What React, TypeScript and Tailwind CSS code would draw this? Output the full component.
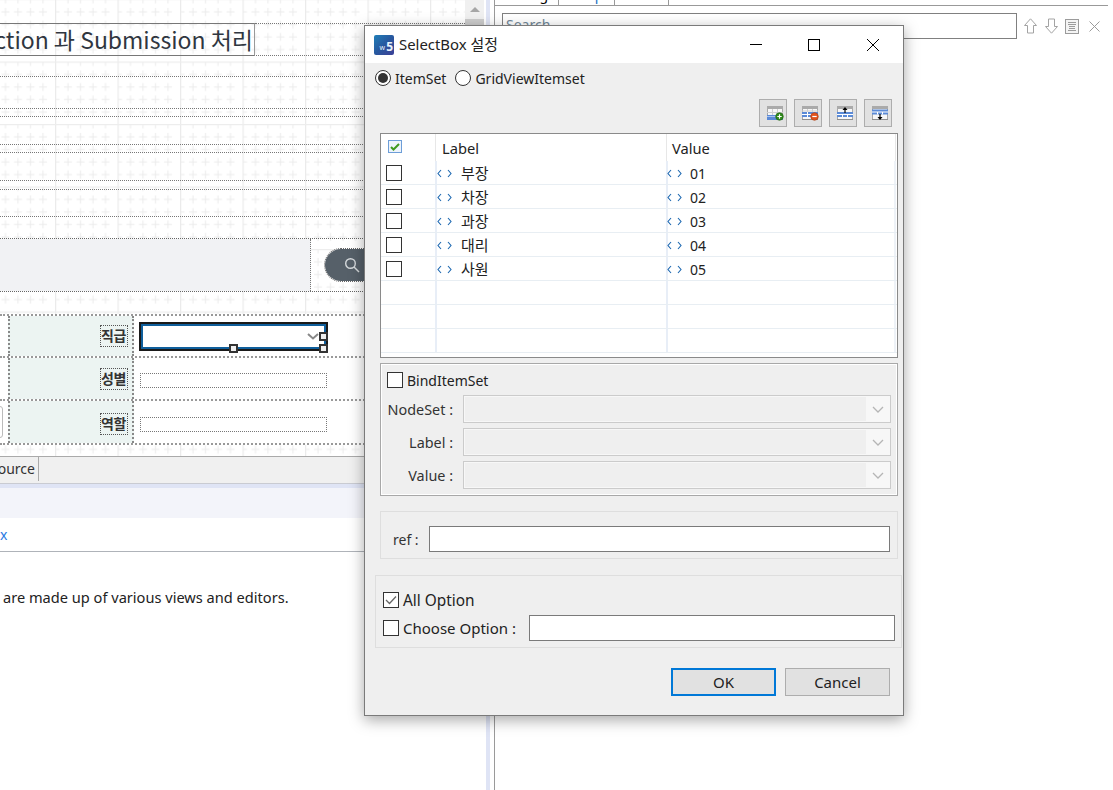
const font = "font-['Noto_Sans','Noto_Sans_CJK_KR',sans-serif]";

const crosses = [0, 12.5, 25, 37.5, 50].flatMap((x) => [0, 12.5, 25, 37.5, 50].map((y) => [x, y]));

function CanvasGrid() {
  return (
    <svg className="absolute inset-0 h-full w-full" aria-hidden="true">
      <defs>
        <pattern id="grid" width="62.5" height="62.5" patternUnits="userSpaceOnUse" patternTransform="translate(-7.5 -1)">
          {crosses.map(([x, y]) => (
            <path key={`${x}-${y}`} d={`M${x - 3.5} ${y + 0.5}h8M${x + 0.5} ${y - 3.5}v8`} stroke="#ebebeb" strokeWidth="1" fill="none" />
          ))}
          <path d="M0.500 0V62.500" stroke="#ebebeb" strokeWidth="1.500" fill="none" />
          <path d="M0 0.500H62.500" stroke="#ededed" strokeWidth="1.500" fill="none" />
        </pattern>
      </defs>
      <rect width="100%" height="314" fill="url(#grid)" />
      <rect y="444" width="100%" height="12" fill="url(#grid)" />
    </svg>
  );
}

function Band({ mt, h }: { mt: string; h: string }) {
  return <div className={`${mt} ${h} border-y border-dotted border-[#777]`} />;
}

function Handle({ className }: { className: string }) {
  return <div className={`absolute h-[9px] w-[9px] border-2 border-[#333] bg-[#efefef] ${className}`} />;
}

function DesignRow({ label, h, children, left, labelClass = "" }: { label: string; h: string; children: React.ReactNode; left?: React.ReactNode; labelClass?: string }) {
  return (
    <div className={`flex ${h} border-b-2 border-dotted border-[#999] bg-white`}>
      <div className="w-[8px] shrink-0 pt-[5px]">{left}</div>
      <div className="flex w-[126px] shrink-0 items-center justify-end border-x-2 border-dotted border-[#888] bg-[#ecf4f2] pr-[4px]">
        <span className={`w-[28px] border border-dotted border-[#555] text-[14px] leading-[20px] font-bold tracking-[-0.5px] whitespace-nowrap text-[#333] ${labelClass}`}>{label}</span>
      </div>
      <div className="flex flex-1 items-center pl-[6px]">{children}</div>
    </div>
  );
}

function LeftPane() {
  return (
    <div className="relative h-[790px] w-[465px] shrink-0 overflow-hidden bg-white">
      <CanvasGrid />
      <div className="relative flex flex-col pt-[23px]">
        <div className="flex h-[33px] border-b border-dotted border-[#777]">
          <div className="-mb-px flex h-[33px] w-[255px] items-center justify-end overflow-hidden border-y border-r border-[#777] border-r-[#999] border-r-dotted pr-[1px] font-['Noto_Sans_CJK_KR',sans-serif] text-[23px] whitespace-nowrap text-[#2f3640]">
            ction 과 Submission 처리
          </div>
          <div className="flex-1 border-t border-dotted border-[#777]" />
        </div>
        <Band mt="mt-[20px]" h="h-[33px]" />
        <Band mt="mt-[7px]" h="h-[29px]" />
        <Band mt="mt-[7px]" h="h-[29px]" />
        <Band mt="mt-[8px]" h="h-[28px]" />
        <div className="mt-[21px] flex h-[54px] border-y border-dotted border-[#666]">
          <div className="w-[311px] border-r border-dotted border-[#777] bg-[#f1f2f4]" />
          <div className="mt-[10px] ml-[14px] flex h-[32px] w-[60px] items-center rounded-l-[16px] bg-[#566069] pl-[19px] outline-1 outline-[#666] outline-dotted">
            <svg width="16" height="16" viewBox="0 0 16 16" fill="none" stroke="#d5d9dc" strokeWidth="1.400">
              <circle cx="6.500" cy="6.500" r="4.800" />
              <path d="M10 10l5 5" />
            </svg>
          </div>
        </div>
        <div className="mt-[22px] border-t-2 border-dotted border-[#999]">
          <DesignRow label="직급" h="h-[42px]">
            <div className="relative flex h-[27px] w-[187px] items-center justify-end border-[3px] border-[#0f5f9c] outline-2 -outline-offset-1 outline-[#1a1a1a]">
              <svg width="12" height="7" viewBox="0 0 12 7" fill="none" stroke="#888" strokeWidth="2" className="mt-[1px] mr-[5px]">
                <path d="M1 1l5 4.500 5-4.500" />
              </svg>
              <Handle className="top-[6px] -right-[4px]" />
              <Handle className="-bottom-[6px] left-[86px]" />
              <Handle className="-right-[4px] -bottom-[6px]" />
            </div>
          </DesignRow>
          <DesignRow label="성별" h="h-[43px]">
            <div className="mt-[4px] h-[15px] w-[187px] border border-dotted border-[#777]" />
          </DesignRow>
          <DesignRow
            label="역할"
            h="h-[44px]"
            labelClass="mt-[3px]"
            left={<div className="-ml-[5px] h-[32px] w-[8px] rounded-[3px] border border-[#bbb]" />}
          >
            <div className="mt-[5px] h-[15px] w-[187px] border border-dotted border-[#777]" />
          </DesignRow>
        </div>
        <div className="h-[11px]" />
        <div className="flex h-[27px] border-t border-[#aaa] bg-[#f0f0f0]">
          <div className="flex h-[24px] w-[39px] items-center justify-end border-r border-[#aaa] pr-[3px] pb-[2px] text-[14px] text-[#333]">
            ource
          </div>
        </div>
        <div className="h-[5px] border-t border-[#c9cbd2] bg-[#dfe4f5]" />
        <div className="h-[30px] bg-[#f3f4fa]" />
        <div className="flex h-[34px] items-center border-b border-[#afb3b9] text-[14px] text-[#2a7ae2]">x</div>
        <p className="mt-[35px] pl-[3px] text-[14.600px] leading-[20px] whitespace-nowrap text-[#222]">
          are made up of various views and editors.
        </p>
      </div>
    </div>
  );
}

function ScrollStrip() {
  return (
    <>
      <div className="flex h-[456px] w-[19px] shrink-0 flex-col bg-[#f0f0f0]">
        <div className="flex h-[19px] items-center justify-center">
          <div className="h-0 w-0 border-x-[5px] border-b-[5px] border-x-transparent border-b-[#a6a6a6]" />
        </div>
        <div className="h-[200px] bg-[#cdcdcd]" />
      </div>
      <div className="ml-[2px] h-[790px] w-[4px] shrink-0 bg-[#dfe4f5]" />
    </>
  );
}

function ArrowIcon({ down }: { down?: boolean }) {
  return (
    <svg width="13" height="16" viewBox="0 0 13 16" fill="#fff" stroke="#a3a3a3" className={down ? "rotate-180" : ""}>
      <path d="M6.500 .8L12.500 7.500H9.500v7.500h-6V7.500H.5z" />
    </svg>
  );
}

function RightPane() {
  return (
    <div className="ml-[4px] flex h-[790px] flex-1 flex-col border-l border-[#9a9a9a]">
      <div className="flex h-[6px] w-[613px] overflow-hidden border-b border-[#999] text-[14px] leading-[20px]">
        <div className="w-[63px] border-b border-white pl-[16px]">
          <span className="-mt-[15px] block">Design</span>
        </div>
        <div className="w-[56px] border-l border-[#999] pl-[12px]">
          <span className="-mt-[15px] block text-[#1670c2]">Script</span>
        </div>
        <div className="w-[54px] border-l border-[#999]" />
        <div className="flex-1 border-l border-[#999]" />
      </div>
      <div className="mt-[7px] flex items-center">
        <div className="ml-[7px] h-[26px] w-[515px] border border-[#808080] pl-[3px] text-[14px] leading-[22px] text-[#6f8596]">
          Search
        </div>
        <div className="ml-[7px] flex items-center">
          <ArrowIcon />
          <div className="ml-[8px]">
            <ArrowIcon down />
          </div>
          <svg width="14" height="15" viewBox="0 0 14 15" fill="#f4f4f4" stroke="#9b9b9b" className="ml-[7px]">
            <rect x=".5" y=".5" width="13" height="14" />
            <path d="M3 3.500h8M3 5.500h8M4 7.500h6M4 9.500h6M3 11.500h8" fill="none" />
          </svg>
          <svg width="11" height="11" viewBox="0 0 11 11" fill="none" stroke="#9b9b9b" className="ml-[10px]">
            <path d="M.5.5l10 10M10.500.5l-10 10" />
          </svg>
        </div>
      </div>
    </div>
  );
}

function Radio({ checked, label }: { checked?: boolean; label: string }) {
  return (
    <div className="flex items-center">
      <div className="flex h-[16px] w-[16px] items-center justify-center rounded-full border border-[#333] bg-white">
        {checked && <div className="h-[10px] w-[10px] rounded-full bg-[#333]" />}
      </div>
      <span className="ml-[4px]">{label}</span>
    </div>
  );
}

function Check({ checked, className = "" }: { checked?: boolean; className?: string }) {
  return (
    <div className={`flex h-[16px] w-[16px] shrink-0 items-center justify-center border border-[#333] bg-white ${className}`}>
      {checked && (
        <svg width="12" height="10" viewBox="0 0 12 10" fill="none" stroke="#666" strokeWidth="1.300">
          <path d="M1 5l3.500 3.500L11 1.500" />
        </svg>
      )}
    </div>
  );
}

function ToolIcon({ kind }: { kind: "add" | "remove" | "up" | "down" }) {
  const blue = "#5b8ad6";
  return (
    <svg width="18" height="15" viewBox="0 0 18 15">
      <rect x=".5" y=".5" width="15" height="13" fill="#f7f7f7" stroke="#a8a8a8" />
      <rect x="0" y="0" width="16" height="3" fill="#aaa" />
      <rect x="0" y="13" width="16" height="1" fill="#8f8f8f" />
      {kind === "add" && (
        <>
          <path d="M0 6.500h16M5.500 3v7M10.500 3v7" stroke="#cfcfcf" fill="none" />
          <rect x="0" y="9" width="16" height="5" fill={blue} />
          <path d="M0 10.500h16" stroke="#a9c3ee" fill="none" />
          <circle cx="12.500" cy="10.500" r="3.800" fill="#2e8a1a" stroke="#1f5f12" strokeWidth=".6" />
          <path d="M10.300 10.500h4.400M12.500 8.300v4.400" stroke="#fff" strokeWidth="1.200" />
        </>
      )}
      {kind === "remove" && (
        <>
          <path d="M0 5h16M5.500 3v3M10.500 3v3" stroke="#cfcfcf" fill="none" />
          <rect x="0" y="6" width="16" height="5" fill={blue} />
          <path d="M5.500 6v5M0 8.500h10" stroke="#fff" fill="none" />
          <circle cx="12.500" cy="10.500" r="3.800" fill="#e2521c" stroke="#a83a10" strokeWidth=".6" />
          <path d="M10.300 10.500h4.400" stroke="#fff" strokeWidth="1.200" />
        </>
      )}
      {kind === "up" && (
        <>
          <rect x="0" y="6" width="16" height="5" fill={blue} />
          <path d="M5.500 8.500v2.500M10.500 8.500v2.500M0 8.500h16" stroke="#fff" fill="none" />
          <path d="M8 7V2.500" stroke="#000" strokeWidth="1.200" />
          <path d="M5.500 4L8 1l2.500 3z" fill="#000" />
        </>
      )}
      {kind === "down" && (
        <>
          <rect x="0" y="3.500" width="16" height="5" fill={blue} />
          <path d="M5.500 6v2.500M10.500 6v2.500M0 6h16" stroke="#fff" fill="none" />
          <path d="M8 8v4.500" stroke="#000" strokeWidth="1.200" />
          <path d="M5.500 11L8 14l2.500-3z" fill="#000" />
        </>
      )}
    </svg>
  );
}

function Code({ className = "" }: { className?: string }) {
  return (
    <svg width="15" height="9" viewBox="0 0 15 9" fill="none" stroke="#1a66b0" strokeWidth="1.100" className={`shrink-0 ${className}`}>
      <path d="M4 1L1 4.500 4 8M11 1l3 3.500L11 8" />
    </svg>
  );
}

const items = [
  ["부장", "01"],
  ["차장", "02"],
  ["과장", "03"],
  ["대리", "04"],
  ["사원", "05"],
  ["", ""],
  ["", ""],
  ["", ""],
];

function ItemTable() {
  return (
    <div className="mt-[6px] mr-[5px] ml-[15px] h-[225px] overflow-hidden border border-[#8a8a8a] bg-white">
      <div className="flex h-[27px] pr-[1px] text-[14.670px]">
        <div className="flex w-[54px] justify-start pt-[6px] pl-[7px]">
          <div className="flex h-[13px] w-[14px] items-center justify-center border border-[#6d9ed8] bg-[#eef4fb]">
            <svg width="10" height="8" viewBox="0 0 10 8" fill="none" stroke="#3f9a1e" strokeWidth="2">
              <path d="M1 4l2.500 2.500L9 1" />
            </svg>
          </div>
        </div>
        <div className="flex w-[231px] items-center border-l border-[#e7e7e7] pl-[6px]">Label</div>
        <div className="flex flex-1 items-center border-x border-[#e7e7e7] pl-[5px]">Value</div>
      </div>
      {items.map(([label, value], i) => (
        <div key={i} className="flex h-[24px] border-b border-[#e8eef3] pr-[1px]">
          <div className="flex w-[54px] items-center pl-[5px]">{label && <Check />}</div>
          <div className="flex w-[231px] items-center border-l-2 border-[#e8eef7] pt-[2px]">
            {label && (
              <>
                <Code />
                <span className="ml-[9px] text-[15px]">{label}</span>
              </>
            )}
          </div>
          <div className="flex flex-1 items-center border-x-2 border-r-[#eef2f7] border-l-[#e8eef7] pt-[2px]">
            {value && (
              <>
                <Code className="-ml-[1px]" />
                <span className="ml-[8px]">{value}</span>
              </>
            )}
          </div>
        </div>
      ))}
    </div>
  );
}

function DisabledCombo({ label, mt }: { label: string; mt: string }) {
  return (
    <div className={`${mt} flex items-center`}>
      <span className="w-[66px] shrink-0 pt-[2px] text-right text-[14.400px] text-[#333]">{label}</span>
      <div className="ml-[10px] flex h-[28px] w-[428px] items-center border border-[#cbcbcb] bg-[#f7f7f7] p-[1px]">
        <div className="h-full flex-1 bg-[#efefef]" />
        <div className="flex w-[23px] items-center justify-center">
          <svg width="12" height="7" viewBox="0 0 12 7" fill="none" stroke="#b5b5b5" strokeWidth="1.300">
            <path d="M1 1l5 5 5-5" />
          </svg>
        </div>
      </div>
    </div>
  );
}

function SelectBoxDialog() {
  return (
    <div className="absolute top-[25px] left-[364px] flex h-[691px] w-[540px] flex-col border border-[#7a7a7a] bg-[#efefef] text-[14px] text-[#222] shadow-[0_4px_14px_rgba(0,0,0,0.35)]">
      <div className="flex h-[37px] shrink-0 items-center bg-white pl-[9px]">
        <div className="flex h-[20px] w-[20px] items-end justify-end rounded-[2px] bg-gradient-to-br from-[#1f7fb8] via-[#27589f] to-[#3a3f96] pr-[1px] pb-[1px] text-[12px] leading-[14px] font-bold text-[#e8f2fb]">
          <span className="mr-[1px] text-[7px] leading-[12px] font-normal">w</span>5
        </div>
        <span className="-mt-[1px] ml-[5px] text-[14.900px]">SelectBox 설정</span>
        <div className="ml-auto flex items-center pr-[24px]">
          <div className="h-px w-[12px] bg-black" />
          <div className="ml-[46px] h-[12px] w-[12px] border border-black" />
          <svg width="12" height="12" viewBox="0 0 12 12" fill="none" stroke="#000" className="ml-[47px]">
            <path d="M0 0l12 12M12 0L0 12" />
          </svg>
        </div>
      </div>

      <div className="mt-[7px] flex h-[16px] items-center gap-[9px] pl-[10px]">
        <Radio checked label="ItemSet" />
        <Radio label="GridViewItemset" />
      </div>

      <div className="mt-[13px] flex justify-end gap-[7px] pr-[11px]">
        {(["add", "remove", "up", "down"] as const).map((kind) => (
          <div key={kind} className="flex h-[28px] w-[28px] items-center justify-center border border-[#adadad] bg-[#e1e1e1] pl-[5px]">
            <ToolIcon kind={kind} />
          </div>
        ))}
      </div>

      <ItemTable />

      <div className="mt-[5px] mr-[5px] ml-[15px] h-[133px] border border-[#a8a8a8] px-[6px] shadow-[inset_0_0_0_1px_#fff]">
        <div className="mt-[8px] flex h-[16px] items-center">
          <Check />
          <span className="ml-[4px]">BindItemSet</span>
        </div>
        <DisabledCombo label="NodeSet :" mt="mt-[7px]" />
        <DisabledCombo label="Label :" mt="mt-[5px]" />
        <DisabledCombo label="Value :" mt="mt-[5px]" />
      </div>

      <div className="mt-[15px] mr-[5px] ml-[15px] flex h-[48px] items-center border border-[#dedede] pt-[8px] pl-[12px]">
        <span className="w-[36px] text-[#333]">ref :</span>
        <div className="h-[26px] w-[461px] border border-[#7a7a7a] bg-white" />
      </div>

      <div className="mt-[16px] mr-[1px] ml-[10px] h-[73px] border border-[#dedede] pl-[7px] text-[15px]">
        <div className="mt-[16px] flex h-[16px] items-center">
          <Check checked />
          <span className="ml-[4px] pt-[2px] text-[15.400px]">All Option</span>
        </div>
        <div className="mt-[7px] flex h-[26px] items-center">
          <Check />
          <span className="ml-[4px] w-[126px]">Choose Option :</span>
          <div className="h-[26px] w-[366px] border border-[#7a7a7a] bg-white" />
        </div>
      </div>

      <div className="mt-[20px] flex justify-end gap-[9px] pr-[13px] text-[15px]">
        <button className="h-[28px] w-[105px] border-2 border-[#0078d7] bg-[#e1e1e1]">OK</button>
        <button className="h-[28px] w-[105px] border border-[#adadad] bg-[#e1e1e1]">Cancel</button>
      </div>
    </div>
  );
}

export default function App() {
  return (
    <div className={`relative flex h-[790px] w-[1113px] overflow-hidden bg-white ${font}`}>
      <LeftPane />
      <ScrollStrip />
      <RightPane />
      <SelectBoxDialog />
    </div>
  );
}
